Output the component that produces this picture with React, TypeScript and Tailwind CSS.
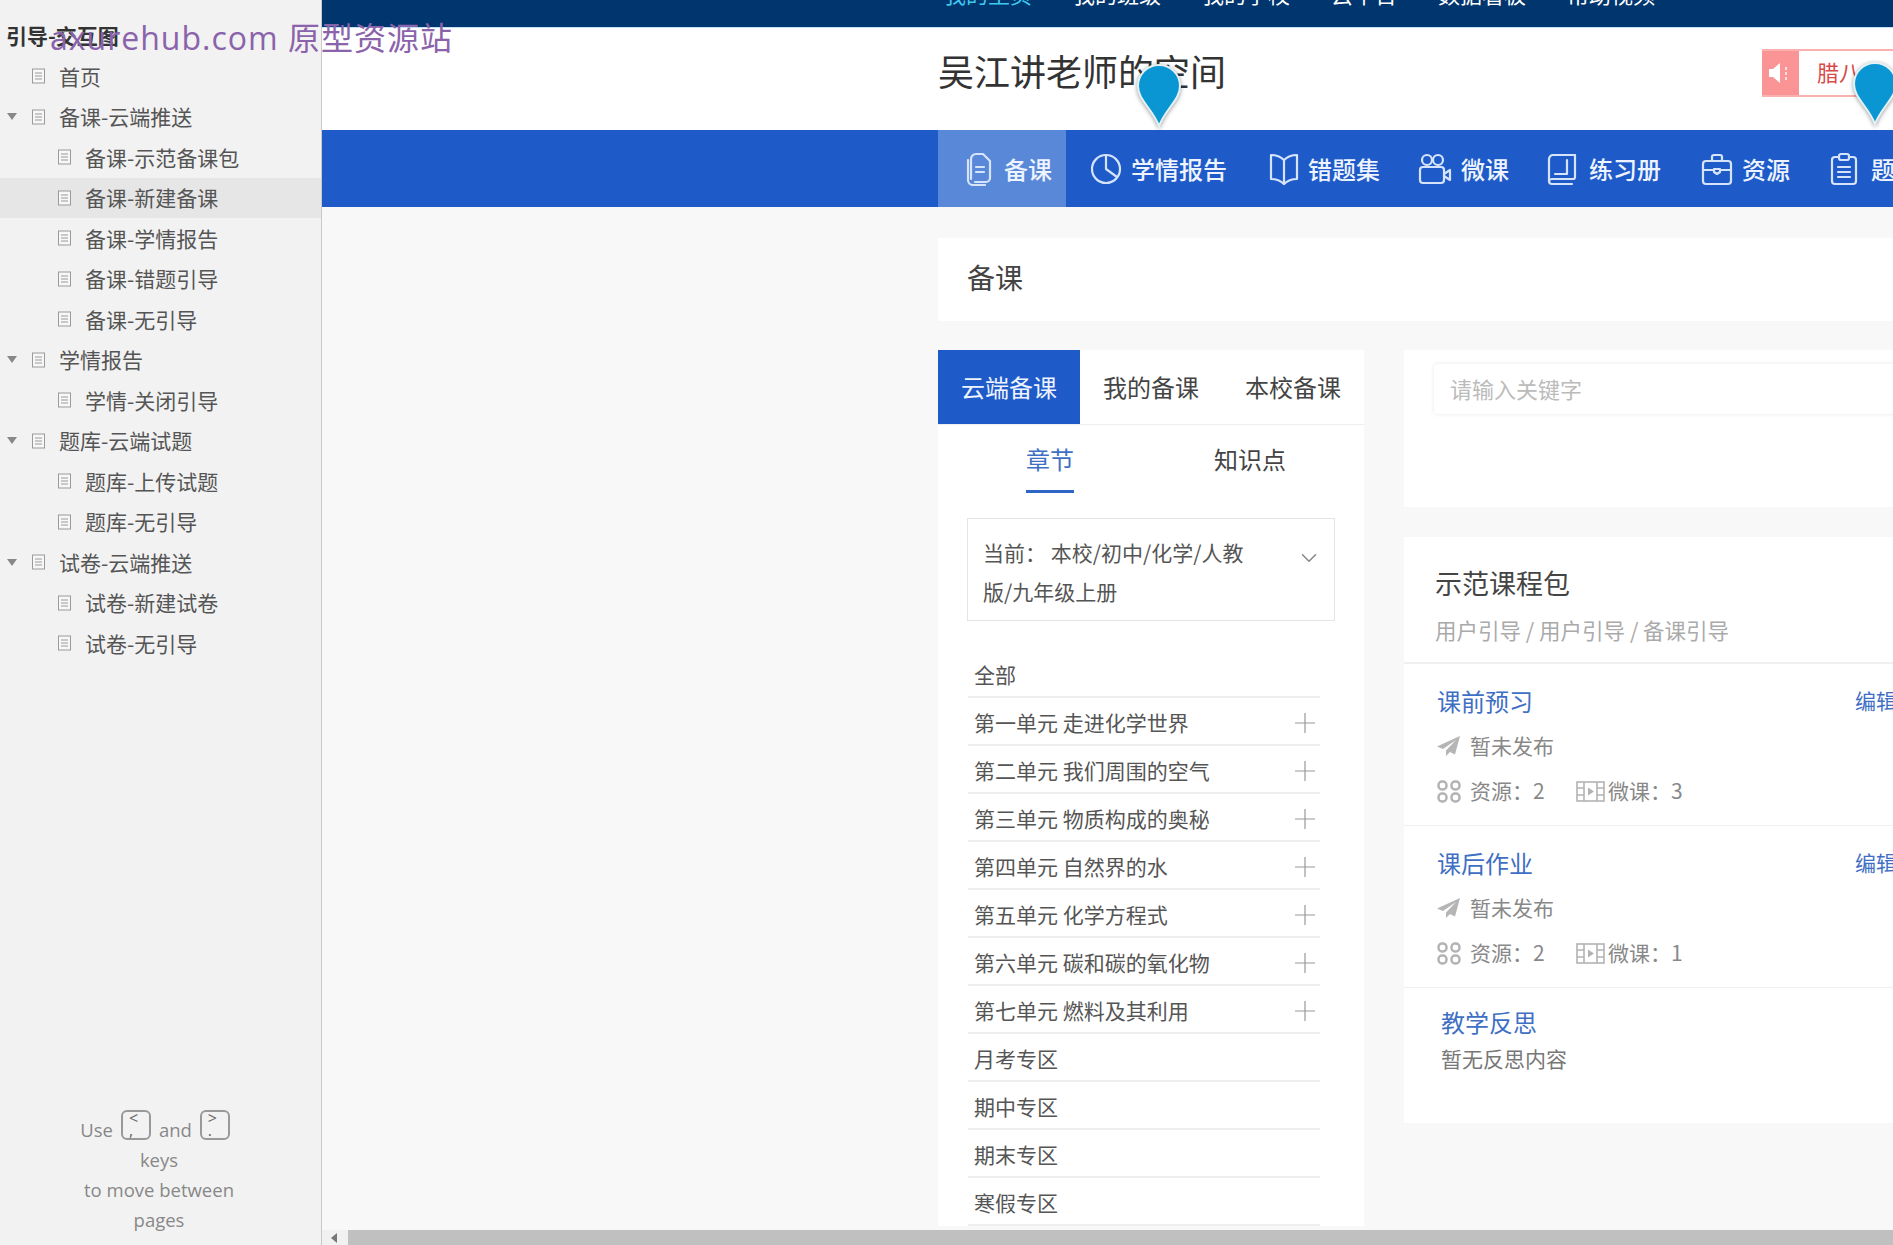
import type { ReactNode } from "react";
import { ChevronDown } from "lucide-react";

const tree = [
  { label: "首页", level: 1 },
  { label: "备课-云端推送", level: 1, open: true },
  { label: "备课-示范备课包", level: 2 },
  { label: "备课-新建备课", level: 2, active: true },
  { label: "备课-学情报告", level: 2 },
  { label: "备课-错题引导", level: 2 },
  { label: "备课-无引导", level: 2 },
  { label: "学情报告", level: 1, open: true },
  { label: "学情-关闭引导", level: 2 },
  { label: "题库-云端试题", level: 1, open: true },
  { label: "题库-上传试题", level: 2 },
  { label: "题库-无引导", level: 2 },
  { label: "试卷-云端推送", level: 1, open: true },
  { label: "试卷-新建试卷", level: 2 },
  { label: "试卷-无引导", level: 2 },
];

const topLinks = ["我的主页", "我的班级", "我的学校", "云平台", "数据看板", "帮助视频"];

const units = [
  { label: "全部" },
  { label: "第一单元 走进化学世界", plus: true },
  { label: "第二单元 我们周围的空气", plus: true },
  { label: "第三单元 物质构成的奥秘", plus: true },
  { label: "第四单元 自然界的水", plus: true },
  { label: "第五单元 化学方程式", plus: true },
  { label: "第六单元 碳和碳的氧化物", plus: true },
  { label: "第七单元 燃料及其利用", plus: true },
  { label: "月考专区" },
  { label: "期中专区" },
  { label: "期末专区" },
  { label: "寒假专区" },
];

function NavIcon({ children, w = 30 }: { children: ReactNode; w?: number }) {
  return (
    <svg width={w} height="34" viewBox={`0 0 ${w} 34`} fill="none" stroke="#d6e4fb" strokeWidth="2.2" strokeLinecap="round" strokeLinejoin="round" className="shrink-0">
      {children}
    </svg>
  );
}

const navItems: { label: string; icon: ReactNode; pad: string }[] = [
  {
    label: "备课",
    pad: "gap-[12px] pl-7 pr-[14px] bg-[#5a88d8]",
    icon: (
      <NavIcon w={26}>
        <path d="M5 27V7a5 5 0 0 1 5-5h7l7 7v17a4 4 0 0 1-4 4H9" />
        <path d="M2 8v20a5 5 0 0 0 5 5h12" />
        <path d="M10 15h8M10 20h8" />
      </NavIcon>
    ),
  },
  {
    label: "学情报告",
    pad: "gap-[9px] pl-6",
    icon: (
      <NavIcon w={32}>
        <circle cx="16" cy="17" r="14" />
        <path d="M16 3v14l11 8" />
      </NavIcon>
    ),
  },
  {
    label: "错题集",
    pad: "gap-[9px] pl-[42px]",
    icon: (
      <NavIcon w={30}>
        <path d="M15 8C11 4 7 3 2 3v24c5 0 9 1 13 5 4-4 8-5 13-5V3c-5 0-9 1-13 5z" />
        <path d="M15 8v24" />
      </NavIcon>
    ),
  },
  {
    label: "微课",
    pad: "gap-[9px] pl-[38px]",
    icon: (
      <NavIcon w={34}>
        <circle cx="9" cy="8" r="5" />
        <circle cx="20" cy="8" r="5" />
        <rect x="2" y="15" width="24" height="16" rx="3" />
        <path d="M26 22l6-4v10l-6-4" />
      </NavIcon>
    ),
  },
  {
    label: "练习册",
    pad: "gap-[12px] pl-[38px]",
    icon: (
      <NavIcon w={30}>
        <path d="M28 3H6a4 4 0 0 0-4 4v22a3 3 0 0 0 3 3h20" />
        <path d="M28 3v22a2 2 0 0 1-2 2H5a3 3 0 0 0-3 2" />
        <path d="M20 8v14H8" />
      </NavIcon>
    ),
  },
  {
    label: "资源",
    pad: "gap-[9px] pl-[40px]",
    icon: (
      <NavIcon w={32}>
        <rect x="2" y="9" width="28" height="23" rx="3" />
        <path d="M11 9V5a2 2 0 0 1 2-2h6a2 2 0 0 1 2 2v4" />
        <path d="M2 18h11M19 18h11" />
        <path d="M13 17h6v3l-3 2-3-2z" />
      </NavIcon>
    ),
  },
  {
    label: "题库",
    pad: "gap-[13px] pl-[40px]",
    icon: (
      <NavIcon w={28}>
        <path d="M9 5H5a3 3 0 0 0-3 3v21a3 3 0 0 0 3 3h18a3 3 0 0 0 3-3V8a3 3 0 0 0-3-3h-4" />
        <rect x="9" y="2" width="10" height="6" rx="2" />
        <path d="M8 15h12M8 20h12M8 25h12" />
      </NavIcon>
    ),
  },
];

function DocIcon() {
  return (
    <svg width="15" height="16" viewBox="0 0 15 16" fill="none" stroke="#9a9a9a" className="shrink-0">
      <rect x="1.5" y="1" width="12" height="14" fill="#f7f7f7" />
      <path d="M4 5h7M4 8h7M4 11h7" />
    </svg>
  );
}

function PlusIcon() {
  return (
    <svg width="20" height="20" viewBox="0 0 20 20" stroke="#999" strokeWidth="1.2" className="shrink-0">
      <path d="M10 0v20M0 10h20" />
    </svg>
  );
}

function PlaneIcon() {
  return (
    <svg width="23" height="20" viewBox="0 0 23 20" fill="#b5b5b5" className="shrink-0">
      <path d="M23 0L0 10.5l6 2.5L19 4 9 14.5V20l4-4 5 2.5z" />
    </svg>
  );
}

function GridIcon() {
  return (
    <svg width="24" height="23" viewBox="0 0 24 23" fill="none" stroke="#b3b3b3" strokeWidth="2.4" className="shrink-0">
      <rect x="1.5" y="1.5" width="8" height="8" rx="3.5" />
      <rect x="14.5" y="1.5" width="8" height="8" rx="3.5" />
      <rect x="1.5" y="13.5" width="8" height="8" rx="3.5" />
      <rect x="14.5" y="13.5" width="8" height="8" rx="3.5" />
    </svg>
  );
}

function FilmIcon() {
  return (
    <svg width="29" height="21" viewBox="0 0 29 21" fill="none" stroke="#b3b3b3" strokeWidth="1.6" className="shrink-0">
      <rect x="1" y="1" width="27" height="19" />
      <path d="M8 1v19M21 1v19M1 7h7M1 14h7M21 7h7M21 14h7" />
      <path d="M12 6.5l6 4-6 4z" fill="#b3b3b3" stroke="none" />
    </svg>
  );
}

function Pin({ className }: { className: string }) {
  return (
    <svg width="46" height="64" viewBox="0 0 46 64" className={`absolute drop-shadow-[0_1px_2px_rgba(0,0,0,0.4)] ${className}`}>
      <path d="M23 62C16 44 2 36 2 22a21 21 0 0 1 42 0c0 14-14 22-21 40z" fill="#0a96d2" stroke="#e4f2f8" strokeWidth="2" />
    </svg>
  );
}

function Key({ top, bottom }: { top: string; bottom: string }) {
  return (
    <span className="mx-[8px] inline-flex h-[30px] w-[30px] -translate-y-[5px] flex-col rounded-[6px] border-2 border-[#999] pl-[6px] text-[16px] leading-[12px] text-[#666]">
      <span>{top}</span>
      <span>{bottom}</span>
    </span>
  );
}

function Lesson({ title, micro }: { title: string; micro: number }) {
  return (
    <div className="border-b border-[#f0f0f0] pb-[19px] pl-[33px] pr-[65px] pt-[19px]">
      <div className="flex h-[36px] items-center justify-between">
        <span className="whitespace-nowrap text-[24px] leading-[36px] text-[#3f6fc4]">{title}</span>
        <span className="w-[44px] shrink-0 whitespace-nowrap pb-[3px] text-[21px] leading-[30px] text-[#3f6fc4]">编辑</span>
      </div>
      <div className="mt-[12px] flex h-[30px] items-center text-[21px] text-[#888]">
        <PlaneIcon />
        <span className="ml-[10px]">暂未发布</span>
      </div>
      <div className="mt-[15px] flex h-[30px] items-center text-[21px] text-[#888]">
        <GridIcon />
        <span className="ml-[9px] w-[106px]">资源：2</span>
        <FilmIcon />
        <span className="ml-[3px]">微课：{micro}</span>
      </div>
    </div>
  );
}

export default function App() {
  return (
    <div className="relative flex h-screen overflow-hidden bg-[#f8f8f8] font-['Noto_Sans_CJK_SC','Noto_Sans',sans-serif]">
      <aside className="flex w-[322px] shrink-0 flex-col border-r border-[#c9c9c9] bg-[#f2f2f2] text-[21px] text-[#555]">
        <div className="flex h-[56px] items-end pb-[6px] pl-[6px] text-[21px] font-bold leading-[30px] text-[#333]">引导-交互图</div>
        {tree.map((item) => (
          <div
            key={item.label}
            className={`flex h-[40.5px] items-center ${item.level === 2 ? "pl-[57px]" : "pl-[31px]"} ${item.active ? "bg-[#e6e6e6]" : ""}`}
          >
            {item.open ? <span className="-ml-[24px] mr-[14px] h-0 w-0 border-x-[5px] border-t-[7px] border-x-transparent border-t-[#888]" /> : null}
            <DocIcon />
            <span className="ml-[13px] leading-none">{item.label}</span>
          </div>
        ))}
        <div className="mt-auto mb-[10px] flex w-[318px] flex-col items-center font-['Open_Sans',sans-serif] text-[18.5px] leading-[30px] text-[#888]">
          <div className="flex items-center">
            Use
            <Key top="<" bottom="," />
            and
            <Key top=">" bottom="." />
          </div>
          <div>keys</div>
          <div>to move between</div>
          <div>pages</div>
        </div>
      </aside>

      <main className="flex min-w-0 flex-1 flex-col">
        <div className="min-h-0 flex-1 overflow-hidden">
          <div className="h-[28px] overflow-hidden border-b border-[#bfe0f5] bg-[#00356e]">
            <div className="-mt-[22px] flex gap-[41px] pl-[622px] text-[22px] leading-[30px] text-white">
              {topLinks.map((link, index) => (
                <span key={link} className={`whitespace-nowrap ${index === 0 ? "text-[#3fc8ee]" : ""}`}>
                  {link}
                </span>
              ))}
            </div>
          </div>

          <div className="flex h-[102px] items-center justify-between bg-white pl-[616px]">
            <h1 className="mb-[18px] whitespace-nowrap text-[36px] font-normal leading-[48px] text-[#333]">吴江讲老师的空间</h1>
            <div className="mb-[12px] flex h-[48px] w-[131px] border-y-2 border-[#fbb0b0]">
              <div className="flex w-[37px] items-center justify-center bg-[#fb9494]">
                <svg width="26" height="24" viewBox="0 0 26 24" fill="#fff">
                  <path d="M1 8h4l7-6v20l-7-6H1z" />
                  <path d="M17 6h2v3h-2zM17 11h2v3h-2zM17 16h2v3h-2z" opacity="0.7" />
                </svg>
              </div>
              <span className="pl-[18px] text-[22px] leading-[40px] text-[#d94b4b]">腊八</span>
            </div>
          </div>

          <nav className="flex h-[77px] bg-[#1f5bc8] pl-[616px]">
            {navItems.map((item) => (
              <div key={item.label} className={`flex shrink-0 items-center ${item.pad}`}>
                {item.icon}
                <span className="whitespace-nowrap text-[24px] font-medium leading-none text-[#eef4ff]">{item.label}</span>
              </div>
            ))}
          </nav>

          <div className="w-[1571px] pl-[616px]">
            <div className="mt-[31px] flex h-[83px] w-[955px] items-center bg-white pb-[5px] pl-[29px] text-[28px] text-[#444]">备课</div>

            <div className="mt-[29px] flex items-start gap-[40px]">
              <section className="w-[426px] shrink-0 bg-white">
                <div className="flex h-[75px] border-b border-[#eee] text-[24px] text-[#444]">
                  <div className="flex w-[142px] items-center justify-center bg-[#1f5bc8] text-[#eef4ff]">云端备课</div>
                  <div className="flex w-[142px] items-center justify-center">我的备课</div>
                  <div className="flex w-[142px] items-center justify-center">本校备课</div>
                </div>
                <div className="flex h-[68px] text-[24px] text-[#444]">
                  <div className="ml-[88px] flex h-[68px] w-[48px] items-center justify-center whitespace-nowrap border-b-[3px] border-[#2e66c7] pt-[2px] text-[#3f6fc4]">章节</div>
                  <div className="ml-[140px] flex h-[68px] items-center pb-[1px]">知识点</div>
                </div>
                <div className="mx-[29px] mt-[25px] flex h-[103px] items-start justify-between border border-[#e4e4e4] pl-[15px] pr-[12px] pt-[14px] text-[21px] leading-[39px] text-[#555]">
                  <div className="w-[275px]">当前： 本校/初中/化学/人教版/九年级上册</div>
                  <ChevronDown size={26} strokeWidth={1.4} color="#888" className="mt-[12px]" />
                </div>
                <div className="ml-[30px] mt-[29px] w-[352px]">
                  {units.map((unit) => (
                    <div key={unit.label} className="flex h-[48px] items-center justify-between border-b-2 border-[#eeeeee] pl-[6px] pr-[5px] pt-[3px] text-[21px] text-[#555]">
                      <span className="whitespace-nowrap">{unit.label}</span>
                      {unit.plus ? <PlusIcon /> : null}
                    </div>
                  ))}
                </div>
              </section>

              <div className="w-[560px] shrink-0">
                <section className="h-[157px] bg-white pl-[30px] pt-[14px]">
                  <div className="flex h-[50px] items-center rounded-[4px] bg-white pb-[2px] pl-[16px] text-[22px] text-[#bbb] shadow-[0_0_4px_rgba(0,0,0,0.1)]">请输入关键字</div>
                </section>

                <section className="mt-[30px] h-[586px] bg-white">
                  <div className="h-[127px] border-b-2 border-[#efefef] pl-[31px] pt-[25px]">
                    <h2 className="text-[27px] font-normal leading-[42px] text-[#444]">示范课程包</h2>
                    <p className="mt-[11px] text-[21.5px] leading-[30px] text-[#aaa]">用户引导 / 用户引导 / 备课引导</p>
                  </div>
                  <Lesson title="课前预习" micro={3} />
                  <Lesson title="课后作业" micro={1} />
                  <div className="pl-[37px] pt-[16px]">
                    <div className="text-[24px] leading-[36px] text-[#3f6fc4]">教学反思</div>
                    <div className="mt-[3px] text-[21px] leading-[30px] text-[#777]">暂无反思内容</div>
                  </div>
                </section>
              </div>
            </div>
          </div>
        </div>

        <div className="flex h-[15px] shrink-0 items-center bg-[#f1f1f1] pl-[9px]">
          <span className="h-0 w-0 border-y-[5px] border-r-[6px] border-y-transparent border-r-[#777]" />
          <div className="ml-[11px] h-full flex-1 bg-[#c0c0c0]" />
        </div>
      </main>

      <Pin className="left-[1136px] top-[64px]" />
      <Pin className="left-[1852px] top-[62px]" />

      <div className="pointer-events-none absolute left-[50px] top-[15px] whitespace-nowrap font-['Open_Sans','Noto_Sans_CJK_SC',sans-serif] text-[32px] leading-[46px] tracking-[1px] text-[#8a63ab]">
        axurehub.com 原型资源站
      </div>
    </div>
  );
}
